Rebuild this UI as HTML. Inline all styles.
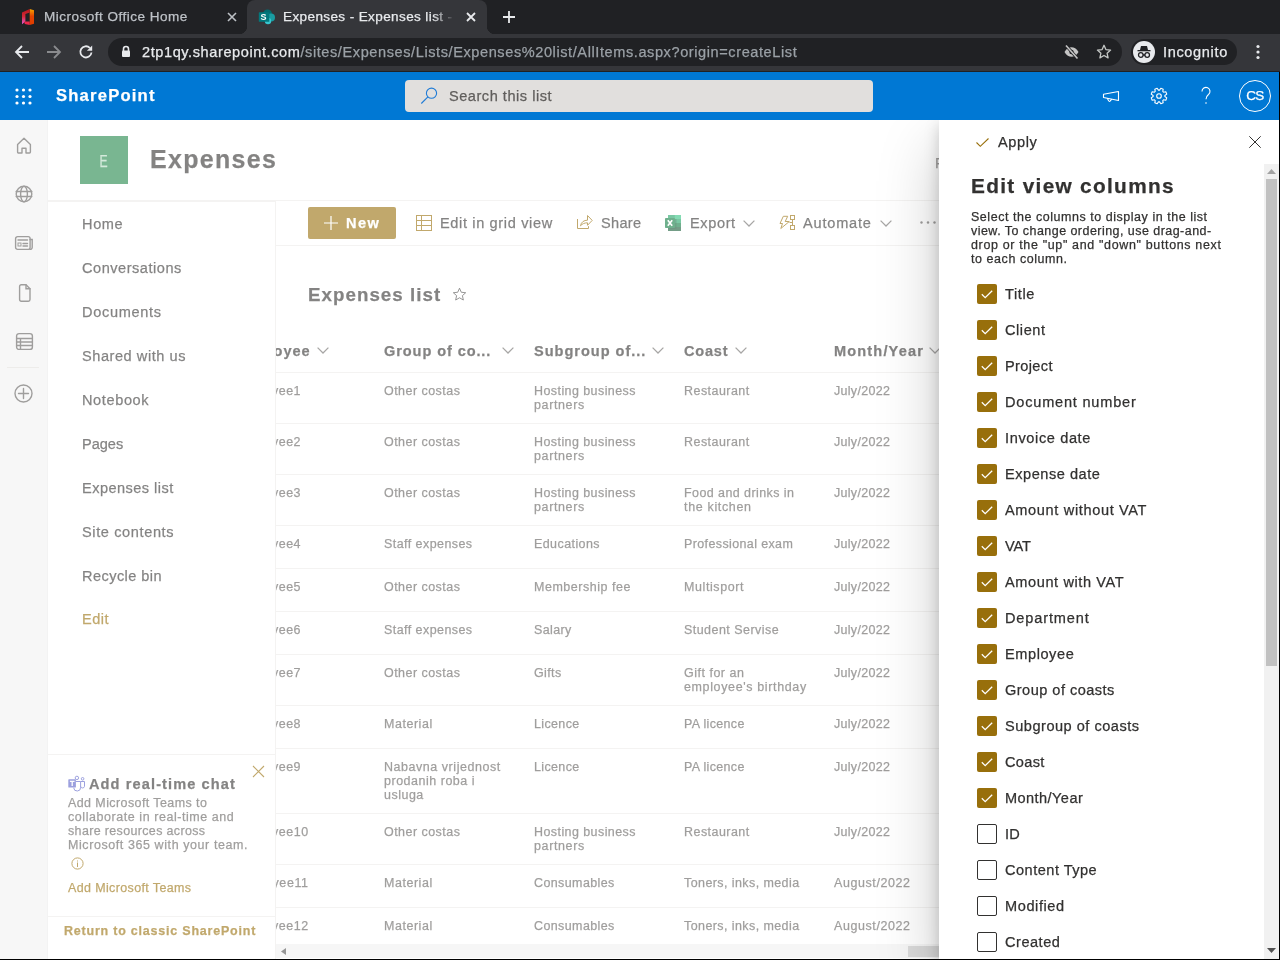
<!DOCTYPE html>
<html><head><meta charset="utf-8">
<style>
*{box-sizing:border-box;margin:0;padding:0}
html,body{width:1280px;height:960px;overflow:hidden}
body{position:relative;-webkit-text-stroke:0.25px currentColor;background:#000;font-family:"Liberation Sans",sans-serif;letter-spacing:0.057em;color:#323130}
.a{position:absolute;white-space:nowrap}
.b{font-weight:bold;letter-spacing:0.09em}
svg{position:absolute;overflow:visible}
/* chrome */
#tabs{left:0;top:0;width:1280px;height:34px;background:#202124}
#toolbar{left:0;top:34px;width:1280px;height:37px;background:#35363a}
#tbline{left:0;top:71px;width:1280px;height:1px;background:#202124}
/* sharepoint */
#sp{left:0;top:72px;width:1279px;height:48px;background:#0078d4}
#page{will-change:transform;left:0;top:120px;width:1279px;height:839px;background:#fff;overflow:hidden}
#rail{left:0;top:0;width:48px;height:839px;background:#f2f2f2;border-right:1px solid #ebebeb}
.cell{position:absolute;font-size:12px;line-height:14px;color:#605e5c;white-space:nowrap}
.hdr{position:absolute;font-size:14px;line-height:20px;color:#323130;font-weight:bold;letter-spacing:0.09em;white-space:nowrap}
.rowline{position:absolute;left:276px;width:1003px;height:1px;background:#edebe9}
.nav{position:absolute;left:82px;font-size:14px;line-height:20px;color:#323130;white-space:nowrap}
#overlay{left:0;top:0;width:1279px;height:839px;background:rgba(255,255,255,0.4)}
#panel{left:939px;top:0;width:340px;height:839px;background:#fff;box-shadow:0 25.6px 57.6px rgba(0,0,0,.22),0 4.8px 14.4px rgba(0,0,0,.18)}
.cb{position:absolute;left:38px;width:20px;height:20px;border-radius:2px}
.cb.on{background:#986f0b}
.cb.off{border:1px solid #323130;background:#fff}
.cbl{position:absolute;left:66px;font-size:14px;line-height:20px;color:#323130;white-space:nowrap}
</style></head>
<body>
<div class="a" style="left:0;top:0;width:1280px;height:120px;overflow:hidden;will-change:transform">
<!-- ============ B<div class="cell" style="letter-spacing:0.518px;left:234px;top:264px;font-size:12.48px">Employee1</div>
    <div class="cell" style="letter-spacing:0.474px;left:384px;top:264px;font-size:12.48px">Other costas</div>
    <div class="cell" style="left:534px;top:264px;font-size:12.48px"><span style="letter-spacing:0.437px">Hosting business</span><br><span style="letter-spacing:0.630px">partners</span></div>
    <div class="cell" style="letter-spacing:0.470px;left:684px;top:264px;font-size:12.48px">Restaurant</div>
    <div class="cell" style="letter-spacing:0.310px;left:834px;top:264px;font-size:12.48px">July/2022</div>
    <div class="rowline" style="top:303px"></div>
    <div class="cell" style="letter-spacing:0.518px;left:234px;top:315px;font-size:12.48px">Employee2</div>
    <div class="cell" style="letter-spacing:0.474px;left:384px;top:315px;font-size:12.48px">Other costas</div>
    <div class="cell" style="left:534px;top:315px;font-size:12.48px"><span style="letter-spacing:0.437px">Hosting business</span><br><span style="letter-spacing:0.630px">partners</span></div>
    <div class="cell" style="letter-spacing:0.470px;left:684px;top:315px;font-size:12.48px">Restaurant</div>
    <div class="cell" style="letter-spacing:0.310px;left:834px;top:315px;font-size:12.48px">July/2022</div>
    <div class="rowline" style="top:354px"></div>
    <div class="cell" style="letter-spacing:0.518px;left:234px;top:366px;font-size:12.48px">Employee3</div>
    <div class="cell" style="letter-spacing:0.474px;left:384px;top:366px;font-size:12.48px">Other costas</div>
    <div class="cell" style="left:534px;top:366px;font-size:12.48px"><span style="letter-spacing:0.437px">Hosting business</span><br><span style="letter-spacing:0.630px">partners</span></div>
    <div class="cell" style="left:684px;top:366px;font-size:12.48px"><span style="letter-spacing:0.434px">Food and drinks in</span><br><span style="letter-spacing:0.670px">the kitchen</span></div>
    <div class="cell" style="letter-spacing:0.310px;left:834px;top:366px;font-size:12.48px">July/2022</div>
    <div class="rowline" style="top:405px"></div>
    <div class="cell" style="letter-spacing:0.518px;left:234px;top:417px;font-size:12.48px">Employee4</div>
    <div class="cell" style="letter-spacing:0.449px;left:384px;top:417px;font-size:12.48px">Staff expenses</div>
    <div class="cell" style="letter-spacing:0.427px;left:534px;top:417px;font-size:12.48px">Educations</div>
    <div class="cell" style="letter-spacing:0.390px;left:684px;top:417px;font-size:12.48px">Professional exam</div>
    <div class="cell" style="letter-spacing:0.310px;left:834px;top:417px;font-size:12.48px">July/2022</div>
    <div class="rowline" style="top:448px"></div>
    <div class="cell" style="letter-spacing:0.518px;left:234px;top:460px;font-size:12.48px">Employee5</div>
    <div class="cell" style="letter-spacing:0.474px;left:384px;top:460px;font-size:12.48px">Other costas</div>
    <div class="cell" style="letter-spacing:0.539px;left:534px;top:460px;font-size:12.48px">Membership fee</div>
    <div class="cell" style="letter-spacing:0.609px;left:684px;top:460px;font-size:12.48px">Multisport</div>
    <div class="cell" style="letter-spacing:0.310px;left:834px;top:460px;font-size:12.48px">July/2022</div>
    <div class="rowline" style="top:491px"></div>
    <div class="cell" style="letter-spacing:0.518px;left:234px;top:503px;font-size:12.48px">Employee6</div>
    <div class="cell" style="letter-spacing:0.449px;left:384px;top:503px;font-size:12.48px">Staff expenses</div>
    <div class="cell" style="letter-spacing:0.390px;left:534px;top:503px;font-size:12.48px">Salary</div>
    <div class="cell" style="letter-spacing:0.469px;left:684px;top:503px;font-size:12.48px">Student Servise</div>
    <div class="cell" style="letter-spacing:0.310px;left:834px;top:503px;font-size:12.48px">July/2022</div>
    <div class="rowline" style="top:534px"></div>
    <div class="cell" style="letter-spacing:0.518px;left:234px;top:546px;font-size:12.48px">Employee7</div>
    <div class="cell" style="letter-spacing:0.474px;left:384px;top:546px;font-size:12.48px">Other costas</div>
    <div class="cell" style="letter-spacing:0.390px;left:534px;top:546px;font-size:12.48px">Gifts</div>
    <div class="cell" style="left:684px;top:546px;font-size:12.48px"><span style="letter-spacing:0.516px">Gift for an</span><br><span style="letter-spacing:0.649px">employee's birthday</span></div>
    <div class="cell" style="letter-spacing:0.310px;left:834px;top:546px;font-size:12.48px">July/2022</div>
    <div class="rowline" style="top:585px"></div>
    <div class="cell" style="letter-spacing:0.518px;left:234px;top:597px;font-size:12.48px">Employee8</div>
    <div class="cell" style="letter-spacing:0.546px;left:384px;top:597px;font-size:12.48px">Material</div>
    <div class="cell" style="letter-spacing:0.369px;left:534px;top:597px;font-size:12.48px">Licence</div>
    <div class="cell" style="letter-spacing:0.337px;left:684px;top:597px;font-size:12.48px">PA licence</div>
    <div class="cell" style="letter-spacing:0.310px;left:834px;top:597px;font-size:12.48px">July/2022</div>
    <div class="rowline" style="top:628px"></div>
    <div class="cell" style="letter-spacing:0.518px;left:234px;top:640px;font-size:12.48px">Employee9</div>
    <div class="cell" style="left:384px;top:640px;font-size:12.48px"><span style="letter-spacing:0.556px">Nabavna vrijednost</span><br><span style="letter-spacing:0.525px">prodanih roba i</span><br><span style="letter-spacing:0.501px">usluga</span></div>
    <div class="cell" style="letter-spacing:0.369px;left:534px;top:640px;font-size:12.48px">Licence</div>
    <div class="cell" style="letter-spacing:0.337px;left:684px;top:640px;font-size:12.48px">PA licence</div>
    <div class="cell" style="letter-spacing:0.310px;left:834px;top:640px;font-size:12.48px">July/2022</div>
    <div class="rowline" style="top:693px"></div>
    <div class="cell" style="letter-spacing:0.536px;left:234px;top:705px;font-size:12.48px">Employee10</div>
    <div class="cell" style="letter-spacing:0.474px;left:384px;top:705px;font-size:12.48px">Other costas</div>
    <div class="cell" style="left:534px;top:705px;font-size:12.48px"><span style="letter-spacing:0.437px">Hosting business</span><br><span style="letter-spacing:0.630px">partners</span></div>
    <div class="cell" style="letter-spacing:0.470px;left:684px;top:705px;font-size:12.48px">Restaurant</div>
    <div class="cell" style="letter-spacing:0.310px;left:834px;top:705px;font-size:12.48px">July/2022</div>
    <div class="rowline" style="top:744px"></div>
    <div class="cell" style="letter-spacing:0.629px;left:234px;top:756px;font-size:12.48px">Employee11</div>
    <div class="cell" style="letter-spacing:0.546px;left:384px;top:756px;font-size:12.48px">Material</div>
    <div class="cell" style="letter-spacing:0.411px;left:534px;top:756px;font-size:12.48px">Consumables</div>
    <div class="cell" style="letter-spacing:0.427px;left:684px;top:756px;font-size:12.48px">Toners, inks, media</div>
    <div class="cell" style="letter-spacing:0.596px;left:834px;top:756px;font-size:12.48px">August/2022</div>
    <div class="rowline" style="top:787px"></div>
    <div class="cell" style="letter-spacing:0.536px;left:234px;top:799px;font-size:12.48px">Employee12</div>
    <div class="cell" style="letter-spacing:0.546px;left:384px;top:799px;font-size:12.48px">Material</div>
    <div class="cell" style="letter-spacing:0.411px;left:534px;top:799px;font-size:12.48px">Consumables</div>
    <div class="cell" style="letter-spacing:0.427px;left:684px;top:799px;font-size:12.48px">Toners, inks, media</div>
    <div class="cell" style="letter-spacing:0.596px;left:834px;top:799px;font-size:12.48px">August/2022</div>
    <div class="rowline" style="top:830px"></div>ER CHROME ============ -->
<div class="a" id="tabs"></div>
<!-- inactive tab -->
<svg style="left:22px;top:9px" width="12" height="16" viewBox="0 0 12 16">
  <defs><linearGradient id="og" x1="0" y1="0" x2="0" y2="1"><stop offset="0" stop-color="#f7a500"/><stop offset="0.45" stop-color="#e24400"/><stop offset="1" stop-color="#e03c00"/></linearGradient>
  <linearGradient id="rg" x1="0" y1="0" x2="0" y2="1"><stop offset="0" stop-color="#b8141a"/><stop offset="0.5" stop-color="#d42a3a"/><stop offset="1" stop-color="#e45ad2"/></linearGradient></defs>
  <path d="M7.7 0L12 1.3V14.7L7.7 16Z" fill="url(#og)"/>
  <path d="M0 3.4L7.7 0V3.6L3.4 5V12.6L0 15.2Z" fill="url(#rg)"/>
  <path d="M2.2 12.4H7.7V16L2.8 15Z" fill="#f0284a"/>
</svg>
<div class="a" style="letter-spacing:0.487px;left:44px;top:8px;line-height:18px;color:#bdc1c6;font-size:13.52px">Microsoft Office Home</div>
<svg style="left:227px;top:12px" width="10" height="10" viewBox="0 0 10 10"><path d="M1 1L9 9M9 1L1 9" stroke="#bdc1c6" stroke-width="1.6"/></svg>
<!-- active tab -->
<div class="a" style="left:247px;top:0;width:240px;height:34px;background:#35363a;border-radius:8px 8px 0 0"></div>
<div class="a" style="left:239px;top:26px;width:8px;height:8px;background:radial-gradient(circle at 0 0,#202124 8px,#35363a 8.5px)"></div>
<div class="a" style="left:487px;top:26px;width:8px;height:8px;background:radial-gradient(circle at 100% 0,#202124 8px,#35363a 8.5px)"></div>
<svg style="left:259px;top:9px" width="16" height="16" viewBox="0 0 16 16">
  <circle cx="8.5" cy="5" r="4.5" fill="#036c70"/>
  <circle cx="12" cy="8.5" r="4" fill="#1a9ba1"/>
  <circle cx="9" cy="12" r="3.2" fill="#37c6d0"/>
  <rect x="-0.2" y="3.2" width="10.5" height="9.6" rx="0.5" fill="#03787c"/>
  <text x="5" y="11.2" font-family="Liberation Sans" font-weight="bold" font-size="9" fill="#fff" text-anchor="middle">S</text>
</svg>
<div class="a" style="letter-spacing:0.393px;left:283px;top:8px;width:172px;overflow:hidden;line-height:18px;color:#e8eaed;-webkit-mask-image:linear-gradient(90deg,#000 150px,transparent 172px);font-size:13.52px">Expenses - Expenses list - Microsoft</div>
<svg style="left:466px;top:12px" width="10" height="10" viewBox="0 0 10 10"><path d="M1 1L9 9M9 1L1 9" stroke="#e8eaed" stroke-width="1.8"/></svg>
<svg style="left:502px;top:10px" width="14" height="14" viewBox="0 0 14 14"><path d="M7 1V13M1 7H13" stroke="#e8eaed" stroke-width="1.8"/></svg>

<div class="a" id="toolbar"></div>
<div class="a" id="tbline"></div>
<!-- nav buttons -->
<svg style="left:14px;top:44px" width="16" height="16" viewBox="0 0 16 16"><path d="M15 8H2M8 2L2 8L8 14" stroke="#e8eaed" stroke-width="1.8" fill="none"/></svg>
<svg style="left:46px;top:44px" width="16" height="16" viewBox="0 0 16 16"><path d="M1 8H14M8 2L14 8L8 14" stroke="#8a8b8e" stroke-width="1.8" fill="none"/></svg>
<svg style="left:78px;top:44px" width="16" height="16" viewBox="0 0 16 16"><path d="M13.5 8.5A5.6 5.6 0 1 1 11.8 3.8" stroke="#e8eaed" stroke-width="1.8" fill="none"/><path d="M14.2 1.5V6.8H8.9Z" fill="#e8eaed"/></svg>
<!-- omnibox -->
<div class="a" style="left:108px;top:38px;width:1014px;height:28px;border-radius:14px;background:#202124"></div>
<svg style="left:121px;top:45px" width="10" height="13" viewBox="0 0 10 13"><path d="M2.5 6V4A2.5 2.5 0 0 1 7.5 4V6" stroke="#e8eaed" stroke-width="1.6" fill="none"/><rect x="1" y="5.5" width="8" height="6.5" rx="1" fill="#e8eaed"/></svg>
<div class="a" style="letter-spacing:0.586px;left:142px;top:42px;line-height:20px;color:#e8eaed;font-size:14.56px">2tp1qy.sharepoint.com<span style="color:#9aa0a6">/sites/Expenses/Lists/Expenses%20list/AllItems.aspx?origin=createList</span></div>
<svg style="left:1063px;top:44px" width="17" height="16" viewBox="0 0 17 16">
  <path d="M1.5 8C3.5 4.5 6 3.3 8.5 3.3S13.5 4.5 15.5 8C13.5 11.5 11 12.7 8.5 12.7S3.5 11.5 1.5 8Z" fill="#c4c4c4"/>
  <circle cx="8.5" cy="8" r="2.2" fill="#202124"/>
  <path d="M3 1.5L14.5 14.5" stroke="#202124" stroke-width="3"/>
  <path d="M3 1.5L14.5 14.5" stroke="#c4c4c4" stroke-width="1.6"/>
</svg>
<svg style="left:1096px;top:44px" width="16" height="16" viewBox="0 0 16 16"><path d="M8 1.3L9.9 5.6L14.6 6.1L11.1 9.2L12.1 13.9L8 11.5L3.9 13.9L4.9 9.2L1.4 6.1L6.1 5.6Z" stroke="#c4c7c5" stroke-width="1.3" fill="none" stroke-linejoin="round"/></svg>
<!-- incognito pill -->
<div class="a" style="left:1131px;top:39px;width:106px;height:26px;border-radius:13px;background:#202124"></div>
<div class="a" style="left:1133px;top:41px;width:22px;height:22px;border-radius:11px;background:#e8eaed"></div>
<svg style="left:1136px;top:45px" width="16" height="14" viewBox="0 0 16 14">
  <path d="M4 5L5 1H11L12 5Z" fill="#202124"/><rect x="1.5" y="5" width="13" height="1.3" fill="#202124"/>
  <circle cx="4.8" cy="10" r="2.3" stroke="#202124" stroke-width="1.3" fill="none"/><circle cx="11.2" cy="10" r="2.3" stroke="#202124" stroke-width="1.3" fill="none"/><path d="M7 10H9" stroke="#202124" stroke-width="1.3"/>
</svg>
<div class="a" style="letter-spacing:0.656px;left:1163px;top:42px;line-height:20px;color:#e8eaed;font-size:14.56px">Incognito</div>
<svg style="left:1255px;top:44px" width="6" height="16" viewBox="0 0 6 16"><circle cx="3" cy="2.5" r="1.6" fill="#e8eaed"/><circle cx="3" cy="8" r="1.6" fill="#e8eaed"/><circle cx="3" cy="13.5" r="1.6" fill="#e8eaed"/></svg>

<!-- ============ SUITE NAV ============ -->
<div class="a" id="sp"></div>
<svg style="left:15px;top:88px" width="17" height="17" viewBox="0 0 17 17" fill="#fff">
  <circle cx="2" cy="2" r="1.6"/><circle cx="8.5" cy="2" r="1.6"/><circle cx="15" cy="2" r="1.6"/>
  <circle cx="2" cy="8.5" r="1.6"/><circle cx="8.5" cy="8.5" r="1.6"/><circle cx="15" cy="8.5" r="1.6"/>
  <circle cx="2" cy="15" r="1.6"/><circle cx="8.5" cy="15" r="1.6"/><circle cx="15" cy="15" r="1.6"/>
</svg>
<div class="a b" style="letter-spacing:1.184px;left:56px;top:86px;line-height:20px;color:#fff;font-size:16.64px">SharePoint</div>
<div class="a" style="left:405px;top:80px;width:468px;height:32px;border-radius:4px;background:#e1dfdd"></div>
<svg style="left:420px;top:87px" width="18" height="18" viewBox="0 0 18 18"><circle cx="11.5" cy="6.2" r="5.1" stroke="#1f7bd6" stroke-width="1.1" fill="none"/><path d="M7.9 9.8L1.3 16.5" stroke="#1f7bd6" stroke-width="1.1"/></svg>
<div class="a" style="letter-spacing:0.528px;left:449px;top:86px;line-height:20px;color:#605e5c;font-size:14.56px">Search this list</div>
<svg style="left:1102px;top:90px" width="18" height="13" viewBox="0 0 18 13"><path d="M1.5 4.2L16.5 1.5V10.5L1.5 7.5Z" stroke="#fff" stroke-width="1.1" fill="none" stroke-linejoin="round"/><path d="M5.3 8.3L6.6 10.8Q7.4 11.9 8.3 10.9L9.7 9.2" stroke="#fff" stroke-width="1.1" fill="none" stroke-linejoin="round"/></svg>
<svg style="left:1150px;top:87px" width="18" height="18" viewBox="0 0 18 18"><path d="M9.55 3.13L10.84 1.22L13.20 2.19L12.77 4.46L13.54 5.23L15.81 4.80L16.78 7.16L14.87 8.45L14.87 9.55L16.78 10.84L15.81 13.20L13.54 12.77L12.77 13.54L13.20 15.81L10.84 16.78L9.55 14.87L8.45 14.87L7.16 16.78L4.80 15.81L5.23 13.54L4.46 12.77L2.19 13.20L1.22 10.84L3.13 9.55L3.13 8.45L1.22 7.16L2.19 4.80L4.46 5.23L5.23 4.46L4.80 2.19L7.16 1.22L8.45 3.13Z" stroke="#fff" stroke-width="1.1" fill="none" stroke-linejoin="round"/><circle cx="9" cy="9" r="2.3" stroke="#fff" stroke-width="1.1" fill="none"/></svg>
<svg style="left:1200px;top:87px" width="12" height="18" viewBox="0 0 12 18"><path d="M2 4.5A4 4 0 1 1 8.5 7.5C6.8 8.8 6 9.8 6 12.3" stroke="#fff" stroke-width="1.1" fill="none"/><circle cx="6" cy="16" r="0.8" fill="#fff"/></svg>
<div class="a" style="left:1239px;top:80px;width:32px;height:32px;border-radius:16px;border:1px solid #fff"></div>
<div class="a" style="letter-spacing:-0.728px;left:1239px;top:80px;width:32px;line-height:32px;color:#fff;text-align:center;font-size:13.52px">CS</div>

</div>
<!-- ============ PAGE ============ -->
<div class="a" id="page">
  <div class="a" id="rail"></div>
  <!-- rail icons (page coords: y-120) -->
  <svg style="left:16px;top:17px" width="16" height="17" viewBox="0 0 16 17"><path d="M2.6 16H6V11.2H10V16H13.4A1 1 0 0 0 14.4 15V7.4L8 1.2L1.6 7.4V15A1 1 0 0 0 2.6 16Z" stroke="#605e5c" stroke-width="1.4" fill="none" stroke-linejoin="round"/></svg>
  <svg style="left:15px;top:65px" width="18" height="18" viewBox="0 0 18 18"><circle cx="9" cy="9" r="7.8" stroke="#605e5c" stroke-width="1.4" stroke-linecap="round" fill="none"/><ellipse cx="9" cy="9" rx="3.4" ry="7.8" stroke="#605e5c" stroke-width="1.4" stroke-linecap="round" fill="none"/><path d="M1.2 6.5H16.8M1.2 11.5H16.8" stroke="#605e5c" stroke-width="1.4" stroke-linecap="round"/></svg>
  <svg style="left:15px;top:116px" width="18" height="14" viewBox="0 0 18 14"><rect x="0.6" y="0.6" width="14.5" height="12.8" rx="2" stroke="#605e5c" stroke-width="1.4" stroke-linecap="round" fill="none"/><path d="M15 3.5H17.2V11.5A2 2 0 0 1 15 13.4" stroke="#605e5c" stroke-width="1.4" stroke-linecap="round" fill="none"/><path d="M3 4H12.5M8 7.5H12.5M8 10H12.5" stroke="#605e5c" stroke-width="1.4" stroke-linecap="round"/><rect x="3" y="7" width="3" height="3" stroke="#605e5c" stroke-width="1" fill="none"/></svg>
  <svg style="left:18px;top:164px" width="13" height="18" viewBox="0 0 13 18"><path d="M1.6 2.4A1.6 1.6 0 0 1 3.2 0.8H8L12 4.8V15.6A1.6 1.6 0 0 1 10.4 17.2H3.2A1.6 1.6 0 0 1 1.6 15.6Z" stroke="#605e5c" stroke-width="1.4" stroke-linecap="round" fill="none" stroke-linejoin="round"/><path d="M8 0.8V4.8H12" stroke="#605e5c" stroke-width="1.4" stroke-linecap="round" fill="none"/></svg>
  <svg style="left:16px;top:213px" width="17" height="17" viewBox="0 0 17 17"><rect x="0.6" y="0.6" width="15.8" height="15.8" rx="2.5" stroke="#605e5c" stroke-width="1.4" stroke-linecap="round" fill="none"/><path d="M0.6 5.5H16.4M0.6 9H16.4M0.6 12.5H16.4M4.5 5.5V16.4" stroke="#605e5c" stroke-width="1.4" stroke-linecap="round"/></svg>
  <div class="a" style="left:7px;top:247px;width:32px;height:1px;background:#e1dfdd"></div>
  <svg style="left:14px;top:264px" width="19" height="19" viewBox="0 0 19 19"><circle cx="9.5" cy="9.5" r="8.5" stroke="#605e5c" stroke-width="1.4" stroke-linecap="round" fill="none"/><path d="M9.5 4.5V14.5M4.5 9.5H14.5" stroke="#605e5c" stroke-width="1.4" stroke-linecap="round"/></svg>

  <!-- site header -->
  <div class="a" style="left:80px;top:16px;width:48px;height:48px;background:#218549"></div>
  <div class="a" style="left:80px;top:18px;width:48px;line-height:48px;font-size:16px;color:#b8dcc4;text-align:center;transform:scaleX(0.76)">E</div>
  <div class="a b" style="letter-spacing:1.344px;left:150px;top:23px;line-height:32px;color:#323130;font-size:24.96px">Expenses</div>
  <div class="a" style="letter-spacing:-0.842px;left:935px;top:33px;line-height:20px;color:#605e5c;font-size:14.56px">F</div>
  <div class="a" style="left:48px;top:80px;width:1231px;height:1px;background:#edebe9"></div><div class="a" style="left:48px;top:81px;width:227px;height:1px;background:#edebe9"></div>

  <!-- left nav -->
  <div class="a" style="left:275px;top:81px;width:1px;height:758px;background:#edebe9"></div>
  <div class="nav" style="letter-spacing:0.631px;top:94px;font-size:14.56px">Home</div>
  <div class="nav" style="letter-spacing:0.524px;top:138px;font-size:14.56px">Conversations</div>
  <div class="nav" style="letter-spacing:0.691px;top:182px;font-size:14.56px">Documents</div>
  <div class="nav" style="letter-spacing:0.556px;top:226px;font-size:14.56px">Shared with us</div>
  <div class="nav" style="letter-spacing:0.618px;top:270px;font-size:14.56px">Notebook</div>
  <div class="nav" style="letter-spacing:-0.017px;top:314px;font-size:14.56px">Pages</div>
  <div class="nav" style="letter-spacing:0.458px;top:358px;font-size:14.56px">Expenses list</div>
  <div class="nav" style="letter-spacing:0.620px;top:402px;font-size:14.56px">Site contents</div>
  <div class="nav" style="letter-spacing:0.434px;top:446px;font-size:14.56px">Recycle bin</div>
  <div class="nav" style="letter-spacing:0.505px;top:489px;color:#986f0b;font-size:14.56px">Edit</div>

  <!-- teams card -->
  <div class="a" style="left:48px;top:634px;width:227px;height:1px;background:#edebe9"></div>
  <svg style="left:252px;top:645px" width="13" height="13" viewBox="0 0 13 13"><path d="M1 1L12 12M12 1L1 12" stroke="#986f0b" stroke-width="1.1"/></svg>
  <svg style="left:68px;top:655px" width="18" height="17" viewBox="0 0 18 17">
    <circle cx="8.9" cy="2.9" r="1.7" fill="none" stroke="#5b62c9" stroke-width="1"/>
    <circle cx="14.6" cy="3.8" r="1.3" fill="none" stroke="#5b62c9" stroke-width="1"/>
    <path d="M12.6 6.5H16.5V11.4A2 2 0 0 1 12.6 11.4" fill="none" stroke="#5b62c9" stroke-width="1"/>
    <path d="M8 6.5H12.6V12.3A3.4 3.4 0 0 1 5.7 12.8" fill="none" stroke="#5b62c9" stroke-width="1"/>
    <rect x="0.3" y="4.3" width="7.6" height="8.2" rx="0.6" fill="#5b62c9"/>
    <path d="M1.9 6.3H6.5M4.2 6.3V11" stroke="#fff" stroke-width="1.3"/>
  </svg>
  <div class="a b" style="letter-spacing:1.116px;left:89px;top:654px;line-height:20px;color:#323130;font-size:14.56px">Add real-time chat</div>
  <div class="a" style="left:68px;top:676px;line-height:14px;color:#605e5c;font-size:12.48px"><span style="letter-spacing:0.418px">Add Microsoft Teams to</span><br><span style="letter-spacing:0.569px">collaborate in real-time and</span><br><span style="letter-spacing:0.357px">share resources across</span><br><span style="letter-spacing:0.594px">Microsoft 365 with your team.</span></div>
  <svg style="left:71px;top:737px" width="13" height="13" viewBox="0 0 13 13"><circle cx="6.5" cy="6.5" r="5.6" stroke="#986f0b" stroke-width="1" fill="none"/><path d="M6.5 5.5V10M6.5 3.5V4.5" stroke="#986f0b" stroke-width="1"/></svg>
  <div class="a" style="letter-spacing:0.379px;left:68px;top:761px;line-height:14px;color:#986f0b;font-size:12.48px">Add Microsoft Teams</div>
  <div class="a" style="left:48px;top:796px;width:227px;height:1px;background:#edebe9"></div>
  <div class="a b" style="letter-spacing:0.798px;left:64px;top:804px;line-height:14px;color:#986f0b;font-size:12.48px">Return to classic SharePoint</div>

  <!-- command bar -->
  <div class="a" style="left:276px;top:125px;width:1003px;height:1px;background:#edebe9"></div>
  <div class="a" style="left:308px;top:87px;width:88px;height:32px;border-radius:2px;background:#986f0b"></div>
  <svg style="left:323px;top:95px" width="16" height="16" viewBox="0 0 16 16"><path d="M8 1V15M1 8H15" stroke="#fff" stroke-width="1.2"/></svg>
  <div class="a b" style="letter-spacing:1.408px;left:346px;top:93px;line-height:20px;color:#fff;font-size:14.56px">New</div>
  <svg style="left:416px;top:95px" width="16" height="16" viewBox="0 0 16 16"><rect x="0.5" y="0.5" width="15" height="15" stroke="#986f0b" stroke-width="1" fill="none"/><path d="M0.5 5.5H15.5M0.5 10.5H15.5M5.5 0.5V15.5" stroke="#986f0b" stroke-width="1"/></svg>
  <div class="a" style="letter-spacing:0.644px;left:440px;top:93px;line-height:20px;color:#323130;font-size:14.56px">Edit in grid view</div>
  <svg style="left:577px;top:94px" width="16" height="16" viewBox="0 0 16 16"><path d="M0.5 5V14.5H11.5V12.2" stroke="#986f0b" stroke-width="1" fill="none"/><path d="M3.5 11.8C4.2 8 7 6.2 10.5 6.2V1.5L15.2 6.4L10.5 11.3V8.8C7.5 8.8 5.2 9.8 3.5 11.8Z" stroke="#986f0b" stroke-width="1" fill="none" stroke-linejoin="round"/></svg>
  <div class="a" style="letter-spacing:0.311px;left:601px;top:93px;line-height:20px;color:#323130;font-size:14.56px">Share</div>
  <svg style="left:664px;top:95px" width="18" height="16" viewBox="0 0 18 16"><rect x="4" y="0" width="13" height="16" rx="0.8" fill="#21a366"/><rect x="10.5" y="0" width="6.5" height="4" fill="#33c481"/><rect x="4" y="0" width="6.5" height="4" fill="#21a366"/><rect x="4" y="8" width="13" height="4" fill="#107c41"/><rect x="4" y="12" width="13" height="4" fill="#185c37"/><rect x="4" y="4" width="8.5" height="10" fill="#0b4a2a" opacity="0.45"/><rect x="1" y="3" width="10" height="10" rx="0.8" fill="#107c41"/><path d="M3.8 5.3L8.2 10.7M8.2 5.3L3.8 10.7" stroke="#fff" stroke-width="1.7"/></svg>
  <div class="a" style="letter-spacing:0.624px;left:690px;top:93px;line-height:20px;color:#323130;font-size:14.56px">Export</div>
  <svg style="left:743px;top:100px" width="12" height="7" viewBox="0 0 12 7"><path d="M0.6 0.6L6 6L11.4 0.6" stroke="#6d6b69" stroke-width="1.25" fill="none"/></svg>
  <svg style="left:779px;top:94px" width="17" height="17" viewBox="0 0 17 17"><path d="M4.3 2.3H8.7L6.2 7.5H10.3L1.8 14.5L3.5 9.5H1Z" stroke="#986f0b" stroke-width="1" fill="none" stroke-linejoin="round"/><rect x="11.5" y="1.5" width="4" height="4" stroke="#986f0b" stroke-width="1" fill="none"/><rect x="11.5" y="11.5" width="4" height="4" stroke="#986f0b" stroke-width="1" fill="none"/><path d="M13.5 5.5V11.5M10.5 8.5H13.5" stroke="#986f0b" stroke-width="1"/></svg>
  <div class="a" style="letter-spacing:0.814px;left:803px;top:93px;line-height:20px;color:#323130;font-size:14.56px">Automate</div>
  <svg style="left:880px;top:100px" width="12" height="7" viewBox="0 0 12 7"><path d="M0.6 0.6L6 6L11.4 0.6" stroke="#6d6b69" stroke-width="1.25" fill="none"/></svg>
  <svg style="left:920px;top:101px" width="16" height="3" viewBox="0 0 16 3"><circle cx="1.5" cy="1.5" r="1.2" fill="#605e5c"/><circle cx="8" cy="1.5" r="1.2" fill="#605e5c"/><circle cx="14.5" cy="1.5" r="1.2" fill="#605e5c"/></svg>

  <!-- list title -->
  <div class="a b" style="letter-spacing:1.053px;left:308px;top:163px;line-height:24px;color:#323130;font-size:18.72px">Expenses list</div>
  <svg style="left:452px;top:167px" width="15" height="15" viewBox="0 0 16 16"><path d="M8 1.3L9.9 5.6L14.6 6.1L11.1 9.2L12.1 13.9L8 11.5L3.9 13.9L4.9 9.2L1.4 6.1L6.1 5.6Z" stroke="#323130" stroke-width="0.9" fill="none" stroke-linejoin="round"/></svg>

  <!-- table -->
  <div class="a" style="left:276px;top:200px;width:1003px;height:639px;overflow:hidden">
  <div class="a" style="left:-276px;top:-200px;width:1279px;height:839px">
    <div class="hdr" style="letter-spacing:0.994px;left:234px;top:221px;font-size:14.56px">Employee</div>
    <div class="hdr" style="letter-spacing:0.909px;left:384px;top:221px;font-size:14.56px">Group of co...</div>
    <div class="hdr" style="letter-spacing:0.980px;left:534px;top:221px;font-size:14.56px">Subgroup of...</div>
    <div class="hdr" style="letter-spacing:0.789px;left:684px;top:221px;font-size:14.56px">Coast</div>
    <div class="hdr" style="letter-spacing:1.156px;left:834px;top:221px;font-size:14.56px">Month/Year</div>
    <svg style="left:317px;top:227px" width="12" height="7" viewBox="0 0 12 7"><path d="M0.6 0.6L6 6L11.4 0.6" stroke="#6d6b69" stroke-width="1.25" fill="none"/></svg>
    <svg style="left:502px;top:227px" width="12" height="7" viewBox="0 0 12 7"><path d="M0.6 0.6L6 6L11.4 0.6" stroke="#6d6b69" stroke-width="1.25" fill="none"/></svg>
    <svg style="left:652px;top:227px" width="12" height="7" viewBox="0 0 12 7"><path d="M0.6 0.6L6 6L11.4 0.6" stroke="#6d6b69" stroke-width="1.25" fill="none"/></svg>
    <svg style="left:735px;top:227px" width="12" height="7" viewBox="0 0 12 7"><path d="M0.6 0.6L6 6L11.4 0.6" stroke="#6d6b69" stroke-width="1.25" fill="none"/></svg>
    <svg style="left:929px;top:227px" width="12" height="7" viewBox="0 0 12 7"><path d="M0.6 0.6L6 6L11.4 0.6" stroke="#6d6b69" stroke-width="1.25" fill="none"/></svg>
    <div class="rowline" style="top:252px"></div>
    <!-- rows inserted -->
    <div class="cell" style="letter-spacing:0.518px;left:234px;top:264px;font-size:12.48px">Employee1</div>
    <div class="cell" style="letter-spacing:0.474px;left:384px;top:264px;font-size:12.48px">Other costas</div>
    <div class="cell" style="left:534px;top:264px;font-size:12.48px"><span style="letter-spacing:0.437px">Hosting business</span><br><span style="letter-spacing:0.630px">partners</span></div>
    <div class="cell" style="letter-spacing:0.470px;left:684px;top:264px;font-size:12.48px">Restaurant</div>
    <div class="cell" style="letter-spacing:0.310px;left:834px;top:264px;font-size:12.48px">July/2022</div>
    <div class="rowline" style="top:303px"></div>
    <div class="cell" style="letter-spacing:0.518px;left:234px;top:315px;font-size:12.48px">Employee2</div>
    <div class="cell" style="letter-spacing:0.474px;left:384px;top:315px;font-size:12.48px">Other costas</div>
    <div class="cell" style="left:534px;top:315px;font-size:12.48px"><span style="letter-spacing:0.437px">Hosting business</span><br><span style="letter-spacing:0.630px">partners</span></div>
    <div class="cell" style="letter-spacing:0.470px;left:684px;top:315px;font-size:12.48px">Restaurant</div>
    <div class="cell" style="letter-spacing:0.310px;left:834px;top:315px;font-size:12.48px">July/2022</div>
    <div class="rowline" style="top:354px"></div>
    <div class="cell" style="letter-spacing:0.518px;left:234px;top:366px;font-size:12.48px">Employee3</div>
    <div class="cell" style="letter-spacing:0.474px;left:384px;top:366px;font-size:12.48px">Other costas</div>
    <div class="cell" style="left:534px;top:366px;font-size:12.48px"><span style="letter-spacing:0.437px">Hosting business</span><br><span style="letter-spacing:0.630px">partners</span></div>
    <div class="cell" style="left:684px;top:366px;font-size:12.48px"><span style="letter-spacing:0.434px">Food and drinks in</span><br><span style="letter-spacing:0.670px">the kitchen</span></div>
    <div class="cell" style="letter-spacing:0.310px;left:834px;top:366px;font-size:12.48px">July/2022</div>
    <div class="rowline" style="top:405px"></div>
    <div class="cell" style="letter-spacing:0.518px;left:234px;top:417px;font-size:12.48px">Employee4</div>
    <div class="cell" style="letter-spacing:0.449px;left:384px;top:417px;font-size:12.48px">Staff expenses</div>
    <div class="cell" style="letter-spacing:0.427px;left:534px;top:417px;font-size:12.48px">Educations</div>
    <div class="cell" style="letter-spacing:0.390px;left:684px;top:417px;font-size:12.48px">Professional exam</div>
    <div class="cell" style="letter-spacing:0.310px;left:834px;top:417px;font-size:12.48px">July/2022</div>
    <div class="rowline" style="top:448px"></div>
    <div class="cell" style="letter-spacing:0.518px;left:234px;top:460px;font-size:12.48px">Employee5</div>
    <div class="cell" style="letter-spacing:0.474px;left:384px;top:460px;font-size:12.48px">Other costas</div>
    <div class="cell" style="letter-spacing:0.539px;left:534px;top:460px;font-size:12.48px">Membership fee</div>
    <div class="cell" style="letter-spacing:0.609px;left:684px;top:460px;font-size:12.48px">Multisport</div>
    <div class="cell" style="letter-spacing:0.310px;left:834px;top:460px;font-size:12.48px">July/2022</div>
    <div class="rowline" style="top:491px"></div>
    <div class="cell" style="letter-spacing:0.518px;left:234px;top:503px;font-size:12.48px">Employee6</div>
    <div class="cell" style="letter-spacing:0.449px;left:384px;top:503px;font-size:12.48px">Staff expenses</div>
    <div class="cell" style="letter-spacing:0.390px;left:534px;top:503px;font-size:12.48px">Salary</div>
    <div class="cell" style="letter-spacing:0.469px;left:684px;top:503px;font-size:12.48px">Student Servise</div>
    <div class="cell" style="letter-spacing:0.310px;left:834px;top:503px;font-size:12.48px">July/2022</div>
    <div class="rowline" style="top:534px"></div>
    <div class="cell" style="letter-spacing:0.518px;left:234px;top:546px;font-size:12.48px">Employee7</div>
    <div class="cell" style="letter-spacing:0.474px;left:384px;top:546px;font-size:12.48px">Other costas</div>
    <div class="cell" style="letter-spacing:0.390px;left:534px;top:546px;font-size:12.48px">Gifts</div>
    <div class="cell" style="left:684px;top:546px;font-size:12.48px"><span style="letter-spacing:0.516px">Gift for an</span><br><span style="letter-spacing:0.649px">employee's birthday</span></div>
    <div class="cell" style="letter-spacing:0.310px;left:834px;top:546px;font-size:12.48px">July/2022</div>
    <div class="rowline" style="top:585px"></div>
    <div class="cell" style="letter-spacing:0.518px;left:234px;top:597px;font-size:12.48px">Employee8</div>
    <div class="cell" style="letter-spacing:0.546px;left:384px;top:597px;font-size:12.48px">Material</div>
    <div class="cell" style="letter-spacing:0.369px;left:534px;top:597px;font-size:12.48px">Licence</div>
    <div class="cell" style="letter-spacing:0.337px;left:684px;top:597px;font-size:12.48px">PA licence</div>
    <div class="cell" style="letter-spacing:0.310px;left:834px;top:597px;font-size:12.48px">July/2022</div>
    <div class="rowline" style="top:628px"></div>
    <div class="cell" style="letter-spacing:0.518px;left:234px;top:640px;font-size:12.48px">Employee9</div>
    <div class="cell" style="left:384px;top:640px;font-size:12.48px"><span style="letter-spacing:0.556px">Nabavna vrijednost</span><br><span style="letter-spacing:0.525px">prodanih roba i</span><br><span style="letter-spacing:0.501px">usluga</span></div>
    <div class="cell" style="letter-spacing:0.369px;left:534px;top:640px;font-size:12.48px">Licence</div>
    <div class="cell" style="letter-spacing:0.337px;left:684px;top:640px;font-size:12.48px">PA licence</div>
    <div class="cell" style="letter-spacing:0.310px;left:834px;top:640px;font-size:12.48px">July/2022</div>
    <div class="rowline" style="top:693px"></div>
    <div class="cell" style="letter-spacing:0.536px;left:234px;top:705px;font-size:12.48px">Employee10</div>
    <div class="cell" style="letter-spacing:0.474px;left:384px;top:705px;font-size:12.48px">Other costas</div>
    <div class="cell" style="left:534px;top:705px;font-size:12.48px"><span style="letter-spacing:0.437px">Hosting business</span><br><span style="letter-spacing:0.630px">partners</span></div>
    <div class="cell" style="letter-spacing:0.470px;left:684px;top:705px;font-size:12.48px">Restaurant</div>
    <div class="cell" style="letter-spacing:0.310px;left:834px;top:705px;font-size:12.48px">July/2022</div>
    <div class="rowline" style="top:744px"></div>
    <div class="cell" style="letter-spacing:0.629px;left:234px;top:756px;font-size:12.48px">Employee11</div>
    <div class="cell" style="letter-spacing:0.546px;left:384px;top:756px;font-size:12.48px">Material</div>
    <div class="cell" style="letter-spacing:0.411px;left:534px;top:756px;font-size:12.48px">Consumables</div>
    <div class="cell" style="letter-spacing:0.427px;left:684px;top:756px;font-size:12.48px">Toners, inks, media</div>
    <div class="cell" style="letter-spacing:0.596px;left:834px;top:756px;font-size:12.48px">August/2022</div>
    <div class="rowline" style="top:787px"></div>
    <div class="cell" style="letter-spacing:0.536px;left:234px;top:799px;font-size:12.48px">Employee12</div>
    <div class="cell" style="letter-spacing:0.546px;left:384px;top:799px;font-size:12.48px">Material</div>
    <div class="cell" style="letter-spacing:0.411px;left:534px;top:799px;font-size:12.48px">Consumables</div>
    <div class="cell" style="letter-spacing:0.427px;left:684px;top:799px;font-size:12.48px">Toners, inks, media</div>
    <div class="cell" style="letter-spacing:0.596px;left:834px;top:799px;font-size:12.48px">August/2022</div>
    <div class="rowline" style="top:830px"></div>
    <!-- h scrollbar -->
    <div class="a" style="left:276px;top:824px;width:1003px;height:14px;background:#f1f1f1"></div>
    <svg style="left:281px;top:828px" width="5" height="7" viewBox="0 0 5 7"><path d="M5 0V7L0 3.5Z" fill="#505050"/></svg>
    <div class="a" style="left:908px;top:826px;width:60px;height:11px;background:#c1c1c1"></div>
  </div>
  </div>

  <div class="a" id="overlay"></div>

  <!-- ============ PANEL ============ -->
  <div class="a" id="panel">
    <svg style="left:37px;top:18px" width="13" height="9" viewBox="0 0 13 9"><path d="M0.5 4.5L4.3 8.3L12.5 0.5" stroke="#986f0b" stroke-width="1.1" fill="none"/></svg>
    <div class="a" style="letter-spacing:0.623px;left:59px;top:12px;line-height:20px;color:#323130;font-size:14.56px">Apply</div>
    <svg style="left:310px;top:16px" width="12" height="12" viewBox="0 0 12 12"><path d="M0.3 0.3L11.7 11.7M11.7 0.3L0.3 11.7" stroke="#323130" stroke-width="1"/></svg>
    <div class="a b" style="letter-spacing:1.319px;left:32px;top:53px;line-height:26px;color:#323130;font-size:20.80px">Edit view columns</div>
    <div class="a" style="left:32px;top:90px;line-height:14px;color:#323130;font-size:12.48px"><span style="letter-spacing:0.548px">Select the columns to display in the list</span><br><span style="letter-spacing:0.469px">view. To change ordering, use drag-and-</span><br><span style="letter-spacing:0.656px">drop or the "up" and "down" buttons next</span><br><span style="letter-spacing:0.569px">to each column.</span></div>
    <div class="cb on" style="top:164px"></div><svg style="left:42px;top:170px" width="12" height="9" viewBox="0 0 12 9"><path d="M0.8 4.3L4.2 7.7L11.2 0.7" stroke="#fff" stroke-width="1.3" fill="none"/></svg>
    <div class="cbl" style="letter-spacing:0.605px;top:164px;font-size:14.56px">Title</div>
    <div class="cb on" style="top:200px"></div><svg style="left:42px;top:206px" width="12" height="9" viewBox="0 0 12 9"><path d="M0.8 4.3L4.2 7.7L11.2 0.7" stroke="#fff" stroke-width="1.3" fill="none"/></svg>
    <div class="cbl" style="letter-spacing:0.553px;top:200px;font-size:14.56px">Client</div>
    <div class="cb on" style="top:236px"></div><svg style="left:42px;top:242px" width="12" height="9" viewBox="0 0 12 9"><path d="M0.8 4.3L4.2 7.7L11.2 0.7" stroke="#fff" stroke-width="1.3" fill="none"/></svg>
    <div class="cbl" style="letter-spacing:0.367px;top:236px;font-size:14.56px">Project</div>
    <div class="cb on" style="top:272px"></div><svg style="left:42px;top:278px" width="12" height="9" viewBox="0 0 12 9"><path d="M0.8 4.3L4.2 7.7L11.2 0.7" stroke="#fff" stroke-width="1.3" fill="none"/></svg>
    <div class="cbl" style="letter-spacing:0.794px;top:272px;font-size:14.56px">Document number</div>
    <div class="cb on" style="top:308px"></div><svg style="left:42px;top:314px" width="12" height="9" viewBox="0 0 12 9"><path d="M0.8 4.3L4.2 7.7L11.2 0.7" stroke="#fff" stroke-width="1.3" fill="none"/></svg>
    <div class="cbl" style="letter-spacing:0.631px;top:308px;font-size:14.56px">Invoice date</div>
    <div class="cb on" style="top:344px"></div><svg style="left:42px;top:350px" width="12" height="9" viewBox="0 0 12 9"><path d="M0.8 4.3L4.2 7.7L11.2 0.7" stroke="#fff" stroke-width="1.3" fill="none"/></svg>
    <div class="cbl" style="letter-spacing:0.534px;top:344px;font-size:14.56px">Expense date</div>
    <div class="cb on" style="top:380px"></div><svg style="left:42px;top:386px" width="12" height="9" viewBox="0 0 12 9"><path d="M0.8 4.3L4.2 7.7L11.2 0.7" stroke="#fff" stroke-width="1.3" fill="none"/></svg>
    <div class="cbl" style="letter-spacing:0.651px;top:380px;font-size:14.56px">Amount without VAT</div>
    <div class="cb on" style="top:416px"></div><svg style="left:42px;top:422px" width="12" height="9" viewBox="0 0 12 9"><path d="M0.8 4.3L4.2 7.7L11.2 0.7" stroke="#fff" stroke-width="1.3" fill="none"/></svg>
    <div class="cbl" style="letter-spacing:-0.153px;top:416px;font-size:14.56px">VAT</div>
    <div class="cb on" style="top:452px"></div><svg style="left:42px;top:458px" width="12" height="9" viewBox="0 0 12 9"><path d="M0.8 4.3L4.2 7.7L11.2 0.7" stroke="#fff" stroke-width="1.3" fill="none"/></svg>
    <div class="cbl" style="letter-spacing:0.601px;top:452px;font-size:14.56px">Amount with VAT</div>
    <div class="cb on" style="top:488px"></div><svg style="left:42px;top:494px" width="12" height="9" viewBox="0 0 12 9"><path d="M0.8 4.3L4.2 7.7L11.2 0.7" stroke="#fff" stroke-width="1.3" fill="none"/></svg>
    <div class="cbl" style="letter-spacing:0.867px;top:488px;font-size:14.56px">Department</div>
    <div class="cb on" style="top:524px"></div><svg style="left:42px;top:530px" width="12" height="9" viewBox="0 0 12 9"><path d="M0.8 4.3L4.2 7.7L11.2 0.7" stroke="#fff" stroke-width="1.3" fill="none"/></svg>
    <div class="cbl" style="letter-spacing:0.576px;top:524px;font-size:14.56px">Employee</div>
    <div class="cb on" style="top:560px"></div><svg style="left:42px;top:566px" width="12" height="9" viewBox="0 0 12 9"><path d="M0.8 4.3L4.2 7.7L11.2 0.7" stroke="#fff" stroke-width="1.3" fill="none"/></svg>
    <div class="cbl" style="letter-spacing:0.478px;top:560px;font-size:14.56px">Group of coasts</div>
    <div class="cb on" style="top:596px"></div><svg style="left:42px;top:602px" width="12" height="9" viewBox="0 0 12 9"><path d="M0.8 4.3L4.2 7.7L11.2 0.7" stroke="#fff" stroke-width="1.3" fill="none"/></svg>
    <div class="cbl" style="letter-spacing:0.512px;top:596px;font-size:14.56px">Subgroup of coasts</div>
    <div class="cb on" style="top:632px"></div><svg style="left:42px;top:638px" width="12" height="9" viewBox="0 0 12 9"><path d="M0.8 4.3L4.2 7.7L11.2 0.7" stroke="#fff" stroke-width="1.3" fill="none"/></svg>
    <div class="cbl" style="letter-spacing:0.336px;top:632px;font-size:14.56px">Coast</div>
    <div class="cb on" style="top:668px"></div><svg style="left:42px;top:674px" width="12" height="9" viewBox="0 0 12 9"><path d="M0.8 4.3L4.2 7.7L11.2 0.7" stroke="#fff" stroke-width="1.3" fill="none"/></svg>
    <div class="cbl" style="letter-spacing:0.431px;top:668px;font-size:14.56px">Month/Year</div>
    <div class="cb off" style="top:704px"></div>
    <div class="cbl" style="letter-spacing:0.173px;top:704px;font-size:14.56px">ID</div>
    <div class="cb off" style="top:740px"></div>
    <div class="cbl" style="letter-spacing:0.495px;top:740px;font-size:14.56px">Content Type</div>
    <div class="cb off" style="top:776px"></div>
    <div class="cbl" style="letter-spacing:0.591px;top:776px;font-size:14.56px">Modified</div>
    <div class="cb off" style="top:812px"></div>
    <div class="cbl" style="letter-spacing:0.517px;top:812px;font-size:14.56px">Created</div>
    <!-- v scrollbar -->
    <div class="a" style="left:325px;top:44px;width:15px;height:795px;background:#f1f1f1"></div>
    <svg style="left:328px;top:49px" width="9" height="5" viewBox="0 0 9 5"><path d="M0 5H9L4.5 0Z" fill="#a3a3a3"/></svg>
    <div class="a" style="left:327px;top:59px;width:11px;height:487px;background:#c1c1c1"></div>
    <svg style="left:328px;top:828px" width="9" height="5" viewBox="0 0 9 5"><path d="M0 0H9L4.5 5Z" fill="#505050"/></svg>
  </div>
</div>
</body></html>
